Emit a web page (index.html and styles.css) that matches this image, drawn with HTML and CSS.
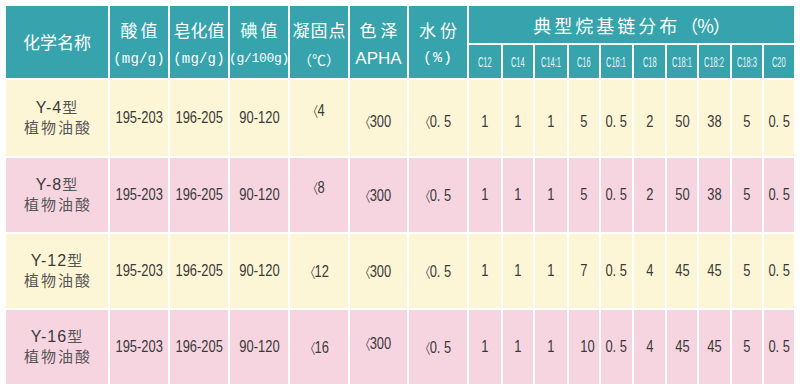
FILE: index.html
```html
<!DOCTYPE html>
<html lang="zh">
<head>
<meta charset="utf-8">
<title>植物油酸规格</title>
<link rel="stylesheet" href="styles.css">
</head>
<body>
<div class="sheet">
  <div class="hd span2"><span class="zh">化学名称</span></div>
  <div class="hd span2 two"><span class="zh ls3">酸值</span><span class="unit mono">(mg/g)</span></div>
  <div class="hd span2 two"><span class="zh">皂化值</span><span class="unit mono">(mg/g)</span></div>
  <div class="hd span2 two"><span class="zh ls3">碘值</span><span class="unit mono tight">(g/100g)</span></div>
  <div class="hd span2 two"><span class="zh ls1">凝固点</span><span class="unit cjk">（℃）</span></div>
  <div class="hd span2 two"><span class="zh ls4">色泽</span><span class="unit apha">APHA</span></div>
  <div class="hd span2 two"><span class="zh ls4">水份</span><span class="unit mono pct">(%)</span></div>
  <div class="hd group"><span class="zh big">典型烷基链分布<span class="paren">（%）</span></span></div>
  <div class="hd sub"><span>C12</span></div>
  <div class="hd sub"><span>C14</span></div>
  <div class="hd sub"><span>C14:1</span></div>
  <div class="hd sub"><span>C16</span></div>
  <div class="hd sub"><span>C16:1</span></div>
  <div class="hd sub"><span>C18</span></div>
  <div class="hd sub"><span>C18:1</span></div>
  <div class="hd sub"><span>C18:2</span></div>
  <div class="hd sub"><span>C18:3</span></div>
  <div class="hd sub"><span>C20</span></div>

  <div class="row yellow first">
    <div class="name"><span class="code">Y-4<span class="cjk">型</span></span><span class="kind">植物油酸</span></div>
    <div class="v"><span>195-203</span></div>
    <div class="v"><span>196-205</span></div>
    <div class="v"><span>90-120</span></div>
    <div class="v raised"><span><i class="lt">〈</i>4</span></div>
    <div class="v low"><span><i class="lt">〈</i>300</span></div>
    <div class="v low"><span><i class="lt">〈</i>0. 5</span></div>
    <div class="v low"><span>1</span></div>
    <div class="v low"><span>1</span></div>
    <div class="v low"><span>1</span></div>
    <div class="v low"><span>5</span></div>
    <div class="v low"><span>0. 5</span></div>
    <div class="v low"><span>2</span></div>
    <div class="v low"><span>50</span></div>
    <div class="v low"><span>38</span></div>
    <div class="v low"><span>5</span></div>
    <div class="v low"><span>0. 5</span></div>
  </div>

  <div class="row pink">
    <div class="name"><span class="code">Y-8<span class="cjk">型</span></span><span class="kind">植物油酸</span></div>
    <div class="v"><span>195-203</span></div>
    <div class="v"><span>196-205</span></div>
    <div class="v"><span>90-120</span></div>
    <div class="v raised"><span><i class="lt">〈</i>8</span></div>
    <div class="v"><span><i class="lt">〈</i>300</span></div>
    <div class="v"><span><i class="lt">〈</i>0. 5</span></div>
    <div class="v"><span>1</span></div>
    <div class="v"><span>1</span></div>
    <div class="v"><span>1</span></div>
    <div class="v"><span>5</span></div>
    <div class="v"><span>0. 5</span></div>
    <div class="v"><span>2</span></div>
    <div class="v"><span>50</span></div>
    <div class="v"><span>38</span></div>
    <div class="v"><span>5</span></div>
    <div class="v"><span>0. 5</span></div>
  </div>

  <div class="row yellow">
    <div class="name"><span class="code">Y-12<span class="cjk">型</span></span><span class="kind">植物油酸</span></div>
    <div class="v"><span>195-203</span></div>
    <div class="v"><span>196-205</span></div>
    <div class="v"><span>90-120</span></div>
    <div class="v"><span><i class="lt">〈</i>12</span></div>
    <div class="v"><span><i class="lt">〈</i>300</span></div>
    <div class="v"><span><i class="lt">〈</i>0. 5</span></div>
    <div class="v"><span>1</span></div>
    <div class="v"><span>1</span></div>
    <div class="v"><span>1</span></div>
    <div class="v"><span>7</span></div>
    <div class="v"><span>0. 5</span></div>
    <div class="v"><span>4</span></div>
    <div class="v"><span>45</span></div>
    <div class="v"><span>45</span></div>
    <div class="v"><span>5</span></div>
    <div class="v"><span>0. 5</span></div>
  </div>

  <div class="row pink">
    <div class="name"><span class="code">Y-16<span class="cjk">型</span></span><span class="kind">植物油酸</span></div>
    <div class="v"><span>195-203</span></div>
    <div class="v"><span>196-205</span></div>
    <div class="v"><span>90-120</span></div>
    <div class="v"><span><i class="lt">〈</i>16</span></div>
    <div class="v raised-s"><span><i class="lt">〈</i>300</span></div>
    <div class="v"><span><i class="lt">〈</i>0. 5</span></div>
    <div class="v"><span>1</span></div>
    <div class="v"><span>1</span></div>
    <div class="v"><span>1</span></div>
    <div class="v shift"><span>10</span></div>
    <div class="v"><span>0. 5</span></div>
    <div class="v"><span>4</span></div>
    <div class="v"><span>45</span></div>
    <div class="v"><span>45</span></div>
    <div class="v"><span>5</span></div>
    <div class="v"><span>0. 5</span></div>
  </div>
</div>
</body>
</html>
```
FILE: styles.css
```css
html, body {
  margin: 0;
  padding: 0;
  background: #ffffff;
}

.sheet {
  margin: 6px 0 0 6px;
  width: 788px;
  display: grid;
  grid-template-columns: 102px 58px 58px 58px 58px 57px 58px 32px 30px 32px 30px 31px 31px 30px 31px 30px 30px;
  grid-template-rows: 37px 33px 76px 74px 74px 74px;
  gap: 2px;
  font-family: "Liberation Sans", "Noto Sans CJK SC", sans-serif;
}

.hd {
  background: #36a3ad;
  color: #ffffff;
  display: flex;
  flex-direction: column;
  align-items: center;
  justify-content: center;
}

.span2 {
  grid-row: span 2;
}

.group {
  grid-column: span 10;
}

.two {
  justify-content: flex-start;
  padding-top: 13px;
}

.zh {
  font-family: "Noto Sans CJK SC", sans-serif;
  font-size: 17px;
  font-weight: 400;
  line-height: 22px;
  white-space: nowrap;
}

.ls1 { letter-spacing: 1px; margin-right: -1px; }
.ls3 { letter-spacing: 3px; margin-right: -3px; }
.ls4 { letter-spacing: 4px; margin-right: -4px; }

.big {
  font-size: 18px;
  letter-spacing: 3px;
  padding-top: 1px;
}

.big .paren {
  letter-spacing: -1px;
}

.unit {
  margin-top: 8px;
  line-height: 20px;
  white-space: nowrap;
}

.mono {
  font-family: "Liberation Mono", monospace;
  font-size: 14px;
  letter-spacing: 0.2px;
}

.mono.tight {
  font-size: 13px;
  letter-spacing: -0.3px;
}

.mono.pct {
  font-size: 15px;
  letter-spacing: 1px;
}

.cjk {
  font-family: "Noto Sans CJK SC", sans-serif;
  font-size: 14px;
}

.apha {
  font-family: "Liberation Sans", sans-serif;
  font-size: 17px;
}

.sub span {
  display: inline-block;
  font-family: "Liberation Sans", sans-serif;
  font-size: 15px;
  color: #e9f6f6;
  transform: scaleX(0.5);
  white-space: nowrap;
}

.row {
  display: contents;
}

.row > div {
  display: flex;
  align-items: center;
  justify-content: center;
  color: #3a3a3a;
}

.yellow > div {
  background: #fdf6d6;
}

.pink > div {
  background: #f6d5e1;
}

.name {
  flex-direction: column;
  padding-bottom: 4px;
  color: #454545;
}

.name .code {
  font-size: 16px;
  line-height: 19px;
  letter-spacing: 1px;
}

.name .code .cjk {
  font-size: 15px;
  color: #555555;
}

.name .kind {
  font-family: "Noto Sans CJK SC", sans-serif;
  font-size: 15px;
  line-height: 19px;
  letter-spacing: 2px;
  margin-right: -2px;
  color: #555555;
}

.v span {
  display: inline-block;
  font-size: 17px;
  transform: scaleX(0.76);
  white-space: nowrap;
}

.lt {
  font-style: normal;
  font-family: "Noto Sans CJK SC", sans-serif;
  font-size: 14px;
  color: #555555;
  margin-left: -7px;
  margin-right: -1px;
}

.first .low {
  padding-top: 7px;
}

.raised {
  padding-bottom: 16px;
}

.raised-s {
  padding-bottom: 8px;
}

.shift {
  padding-left: 6px;
}
```
